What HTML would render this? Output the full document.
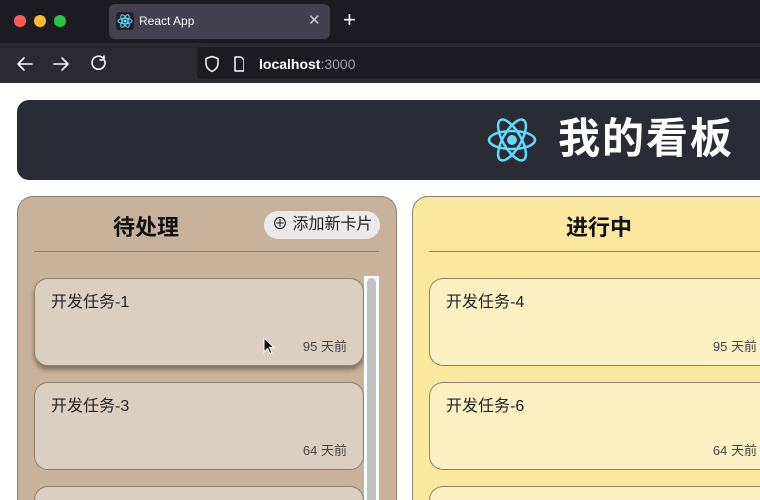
<!DOCTYPE html>
<html><head><meta charset="utf-8"><style>
*{margin:0;padding:0;box-sizing:border-box}
html,body{width:760px;height:500px;overflow:hidden}
body{background:#fff;font-family:"Liberation Sans","Noto Sans CJK SC",sans-serif;position:relative}
.abs{position:absolute}
.tabbar{left:0;top:0;width:760px;height:43px;background:#1c1b22}
.nav{left:0;top:43px;width:760px;height:40px;background:#2b2a33}
.dot{width:12px;height:12px;border-radius:50%;top:15px}
.tab{left:109px;top:4px;width:221px;height:35px;background:#42414d;border-radius:6px}
.url{left:197px;top:47px;width:563px;height:32px;background:#1c1b22;border-radius:4px 0 0 4px}
.hdr{left:17px;top:100px;width:743px;height:80px;background:#292b35;border-radius:12px 0 0 12px}
.col{top:196px;height:304px;border:1px solid #8a8070;border-bottom:none;border-radius:16px 16px 0 0}
.card{border:1px solid #8a8070;border-radius:14px;height:88px}
.ct{position:absolute;left:16px;top:9px;font-size:16px;color:#222}
.cd{position:absolute;right:16px;top:57px;font-size:13px;color:#444}
</style></head><body>
<div class="abs tabbar"></div>
<div class="abs dot" style="left:14px;background:#ff5f57"></div>
<div class="abs dot" style="left:34px;background:#febc2e"></div>
<div class="abs dot" style="left:54px;background:#28c840"></div>
<div class="abs tab"></div>
<svg class="abs" style="left:116px;top:12px" width="18" height="18" viewBox="0 0 18 18"><rect width="18" height="18" rx="3" fill="#22232a"/><g fill="none" stroke="#61dafb" stroke-width="1"><ellipse cx="9" cy="9" rx="7" ry="2.7"/><ellipse cx="9" cy="9" rx="7" ry="2.7" transform="rotate(60 9 9)"/><ellipse cx="9" cy="9" rx="7" ry="2.7" transform="rotate(120 9 9)"/></g><circle cx="9" cy="9" r="1.5" fill="#61dafb"/></svg>
<div class="abs" style="left:139px;top:14px;font-size:12px;color:#fbfbfe">React App</div>
<div class="abs" style="left:308px;top:11px;font-size:15px;color:#ccc">✕</div>
<div class="abs" style="left:343px;top:7px;font-size:22px;color:#fbfbfe;font-weight:300">+</div>
<div class="abs nav"></div>
<svg class="abs" style="left:16px;top:55px" width="100" height="18" viewBox="0 0 100 18" fill="none" stroke="#fbfbfe" stroke-width="1.6" stroke-linecap="round" stroke-linejoin="round"><path d="M2 9h14M8 3L2 9l6 6"/><path d="M38 9h14M46 3l6 6-6 6"/><path d="M87 3a6.5 6.5 0 1 0 1.8 3"/><path d="M88 1v4h-4"/></svg>
<div class="abs url"></div>
<svg class="abs" style="left:204px;top:55px" width="40" height="18" viewBox="0 0 40 18" fill="none" stroke="#fbfbfe" stroke-width="1.5" stroke-linejoin="round"><path d="M8 1.5l6 2v5c0 4-3 6.5-6 8-3-1.5-6-4-6-8v-5z"/><path d="M31 2h6l3 3v11h-9z"/></svg>
<div class="abs" style="left:259px;top:56px;font-size:14px;color:#fbfbfe;font-weight:bold">localhost<span style="color:#9f9ea6;font-weight:normal">:3000</span></div>
<div class="abs hdr"></div>
<svg class="abs" style="left:486px;top:113px" width="52" height="54" viewBox="0 0 52 54"><g fill="none" stroke="#61dafb" stroke-width="2.5"><ellipse cx="26" cy="27" rx="23" ry="9"/><ellipse cx="26" cy="27" rx="23" ry="9" transform="rotate(60 26 27)"/><ellipse cx="26" cy="27" rx="23" ry="9" transform="rotate(120 26 27)"/></g><circle cx="26" cy="27" r="5" fill="#61dafb"/></svg>
<div class="abs" style="left:558px;top:114px;font-size:42px;line-height:50px;color:#fff;font-weight:bold;letter-spacing:2px;white-space:nowrap">我的看板</div>

<div class="abs col" style="left:17px;width:380px;background:#c9b29b"></div>
<div class="abs" style="left:113px;top:210px;font-size:22px;font-weight:bold;color:#111">待处理</div>
<div class="abs" style="left:264px;top:211px;width:116px;height:28px;background:#eceaea;border-radius:14px;font-size:16px;line-height:28px;color:#222;padding-left:8px;white-space:nowrap">⊕ 添加新卡片</div>
<div class="abs" style="left:34px;top:251px;width:345px;height:1px;background:#8a8070"></div>
<div class="abs card" style="left:34px;top:278px;width:330px;background:#dccfc0;box-shadow:0 4px 4px rgba(0,0,0,.35)"><div class="ct">开发任务-1</div><div class="cd">95 天前</div></div>
<div class="abs card" style="left:34px;top:382px;width:330px;background:#dccfc0"><div class="ct">开发任务-3</div><div class="cd">64 天前</div></div>
<div class="abs card" style="left:34px;top:486px;width:330px;height:14px;border-bottom:none;border-radius:14px 14px 0 0;background:#dccfc0"></div>
<div class="abs" style="left:364px;top:276px;width:15px;height:224px;background:#fff"></div>
<div class="abs" style="left:367px;top:278px;width:9px;height:222px;background:#c2c2c2;border-radius:5px 5px 0 0"></div>
<svg class="abs" style="left:263px;top:337px" width="12" height="18" viewBox="0 0 12 18"><path d="M1 1v14l3.5-3.5 2.5 5 2-1-2.5-5H11z" fill="#111" stroke="#fff" stroke-width="1"/></svg>

<div class="abs col" style="left:412px;width:348px;border-right:none;border-radius:16px 0 0 0;background:#fbe89f"></div>
<div class="abs" style="left:566px;top:210px;font-size:22px;font-weight:bold;color:#111">进行中</div>
<div class="abs" style="left:429px;top:251px;width:331px;height:1px;background:#8a8070"></div>
<div class="abs card" style="left:429px;top:278px;width:331px;border-right:none;border-radius:14px 0 0 14px;background:#fdf0c2"><div class="ct">开发任务-4</div><div class="cd" style="right:3px">95 天前</div></div>
<div class="abs card" style="left:429px;top:382px;width:331px;border-right:none;border-radius:14px 0 0 14px;background:#fdf0c2"><div class="ct">开发任务-6</div><div class="cd" style="right:3px">64 天前</div></div>
<div class="abs card" style="left:429px;top:486px;width:331px;height:14px;border-right:none;border-bottom:none;border-radius:14px 0 0 0;background:#fdf0c2"></div>
</body></html>
